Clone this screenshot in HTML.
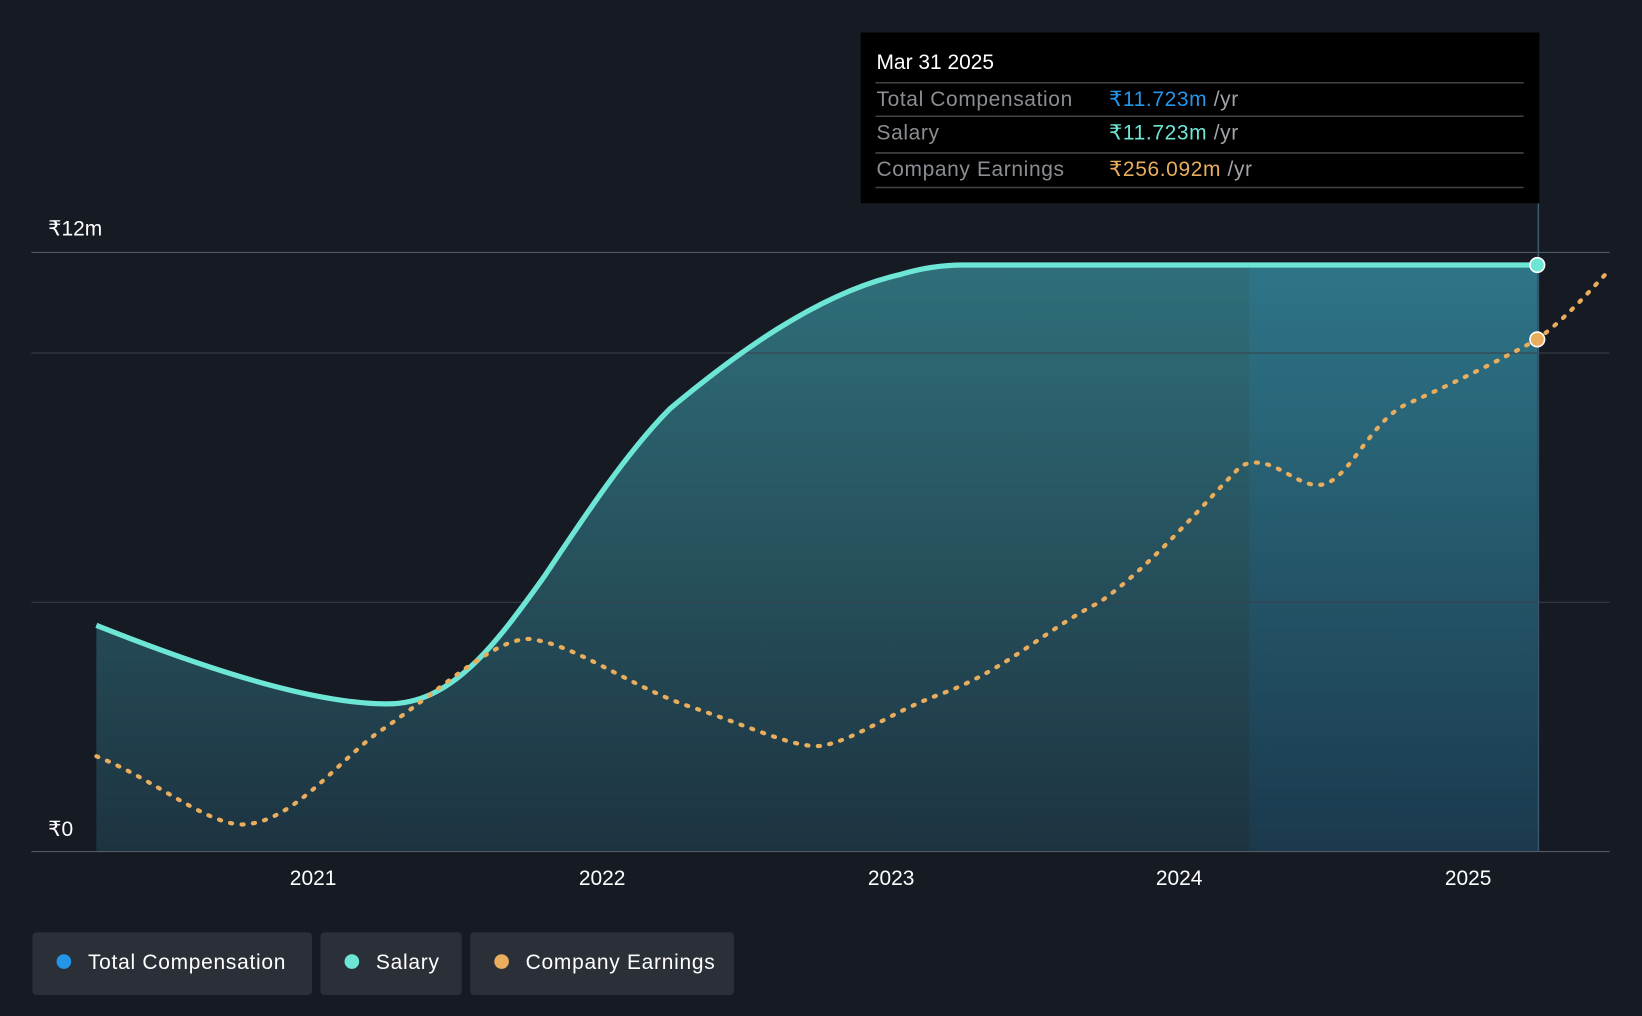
<!DOCTYPE html>
<html><head><meta charset="utf-8"><style>
html,body{margin:0;padding:0;background:#151a23;width:1642px;height:1016px;overflow:hidden}
svg{display:block}
text{font-family:"Liberation Sans",sans-serif}
</style></head><body>
<svg width="1642" height="1016" viewBox="0 0 1568 970" preserveAspectRatio="none">
<defs>
<linearGradient id="g" x1="0" y1="0" x2="0" y2="1">
<stop offset="0" stop-color="#2f6f7a"/>
<stop offset="1" stop-color="#1d3340"/>
</linearGradient>
<linearGradient id="h" x1="0" y1="0" x2="0" y2="1">
<stop offset="0" stop-color="#2e7a92"/>
<stop offset="1" stop-color="#1a3d56"/>
</linearGradient>
<clipPath id="c"><path d="M92,597 C200,640 300,672 370,672 C430,672 470,620 520,550 C560,490 600,430 640,390 C700,340 780,280 860,262 C880,256 900,253 920,253 L1468,253 L1468,813 L92,813 Z"/></clipPath>
</defs>
<rect width="1568" height="970" fill="#151a23"/>
<path d="M92,597 C200,640 300,672 370,672 C430,672 470,620 520,550 C560,490 600,430 640,390 C700,340 780,280 860,262 C880,256 900,253 920,253 L1468,253 L1468,813 L92,813 Z" fill="url(#g)"/>
<rect x="1193" y="240" width="277" height="573" fill="url(#h)" opacity="0.6" clip-path="url(#c)"/>
<g stroke="#3a404a" stroke-width="1">
<line x1="30" y1="241" x2="1537" y2="241" stroke="#555b64"/>
<line x1="30" y1="337" x2="1537" y2="337"/>
<line x1="30" y1="575" x2="1537" y2="575"/>
<line x1="30" y1="813" x2="1537" y2="813" stroke="#555b64"/>
</g>
<line x1="1469" y1="194" x2="1469" y2="813" stroke="#3b5a70" stroke-width="1.5"/>
<path d="M92,597 C200,640 300,672 370,672 C430,672 470,620 520,550 C560,490 600,430 640,390 C700,340 780,280 860,262 C880,256 900,253 920,253 L1468,253" fill="none" stroke="#6ee6d6" stroke-width="5"/>
<path d="M92,722 C150,745 200,790 235,787 C280,783 320,730 360,700 C420,660 470,610 505,610 C550,615 600,655 660,675 C720,695 760,715 785,712 C820,705 850,680 900,662 C960,640 1000,600 1050,575 C1100,540 1150,480 1185,445 C1215,430 1240,470 1265,462 C1290,455 1310,400 1345,385 C1390,365 1430,345 1468,324 C1500,300 1520,275 1537,258" fill="none" stroke="#e9ad5e" stroke-width="4" stroke-dasharray="2 9" stroke-linecap="round"/>
<circle cx="1468" cy="253" r="7" fill="#6ee6d6" stroke="#fff" stroke-width="1.5"/>
<circle cx="1468" cy="324" r="7" fill="#e9ad5e" stroke="#fff" stroke-width="1.5"/>
<text x="46" y="225" fill="#fff" font-size="20">₹12m</text>
<text x="46" y="798" fill="#fff" font-size="20">₹0</text>
<g fill="#fff" font-size="20" text-anchor="middle">
<text x="299" y="845">2021</text><text x="575" y="845">2022</text><text x="851" y="845">2023</text><text x="1126" y="845">2024</text><text x="1402" y="845">2025</text>
</g>
<rect x="822" y="31" width="648" height="163" fill="#000"/>
<text x="837" y="66" fill="#fff" font-size="20">Mar 31 2025</text>
<g stroke="#444" stroke-width="1.5">
<line x1="836" y1="79" x2="1455" y2="79"/><line x1="836" y1="111" x2="1455" y2="111"/><line x1="836" y1="146" x2="1455" y2="146"/><line x1="836" y1="179" x2="1455" y2="179"/>
</g>
<g font-size="20" letter-spacing="0.6">
<text x="837" y="101" fill="#8a8d92">Total Compensation</text>
<text x="1059" y="101" fill="#2496e8">₹11.723m <tspan fill="#a0a3a8">/yr</tspan></text>
<text x="837" y="133" fill="#8a8d92">Salary</text>
<text x="1059" y="133" fill="#6ee6d6">₹11.723m <tspan fill="#a0a3a8">/yr</tspan></text>
<text x="837" y="168" fill="#8a8d92">Company Earnings</text>
<text x="1059" y="168" fill="#e9ad5e">₹256.092m <tspan fill="#a0a3a8">/yr</tspan></text>
</g>
<g font-size="20" fill="#fff" letter-spacing="0.7">
<rect x="31" y="890" width="267" height="60" rx="4" fill="#2a2f38"/>
<circle cx="61" cy="918" r="7" fill="#2496e8"/>
<text x="84" y="925">Total Compensation</text>
<rect x="306" y="890" width="135" height="60" rx="4" fill="#2a2f38"/>
<circle cx="336" cy="918" r="7" fill="#6ee6d6"/>
<text x="359" y="925">Salary</text>
<rect x="449" y="890" width="252" height="60" rx="4" fill="#2a2f38"/>
<circle cx="479" cy="918" r="7" fill="#e9ad5e"/>
<text x="502" y="925">Company Earnings</text>
</g>
</svg>
</body></html>
